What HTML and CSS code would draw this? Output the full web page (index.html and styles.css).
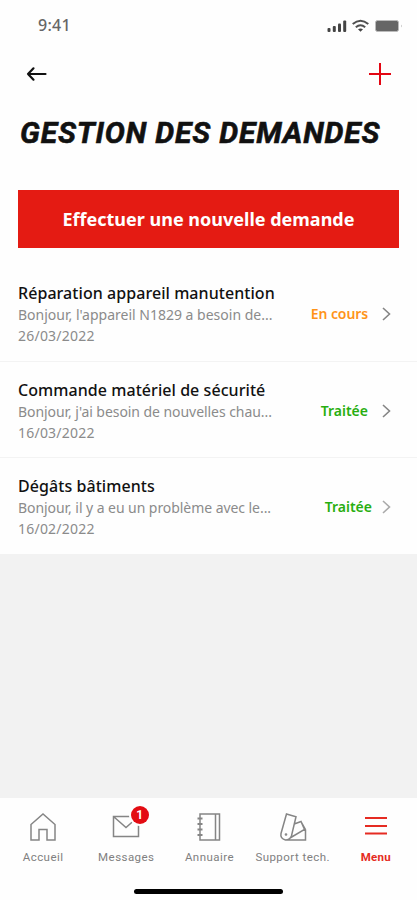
FILE: index.html
```html
<!DOCTYPE html>
<html lang="fr">
<head>
<meta charset="utf-8">
<title>Gestion des demandes</title>
<link rel="stylesheet" href="styles.css">
</head>
<body>
<div class="screen">
  <header class="status">
    <span class="time">9:41</span>
    <svg class="status-icons" width="76" height="14" viewBox="0 0 76 14">
      <g fill="#444"><rect x="0.5" y="9" width="3" height="4" rx="1"/><rect x="5.800" y="7" width="3" height="6" rx="1"/><rect x="11" y="4.500" width="3" height="8.500" rx="1"/><rect x="16.200" y="1.500" width="3" height="11.500" rx="1"/></g>
      <g fill="none" stroke="#505050" stroke-width="2"><path d="M25.700 5.100Q33.500-1.500 41.300 5.100"/><path d="M28.800 8.200Q33.500 4.300 38.200 8.200"/></g>
      <path d="M31 10.200Q33.500 8.800 36 10.200L33.500 12.800Z" fill="#444"/>
      <rect x="48.500" y="1.500" width="23" height="11" rx="2" fill="#666" stroke="#bbb"/><path d="M74 5.500v3q1.500-1.500 0-3" fill="#aaa"/>
    </svg>
  </header>
  <nav class="topbar">
    <svg width="22" height="16" viewBox="0 0 22 16" fill="none" stroke="#111" stroke-width="2.200" stroke-linecap="round" stroke-linejoin="round"><path d="M19.500 8H2M7.500 2.300L2 8l5.500 5.700"/></svg>
    <svg class="plus" width="22" height="22" viewBox="0 0 22 22" fill="none" stroke="#e30613" stroke-width="2"><path d="M11 0v22M0 11h22"/></svg>
  </nav>
  <h1>GESTION DES DEMANDES</h1>
  <button class="cta">Effectuer une nouvelle demande</button>
  <main class="list">
    <article class="item first">
      <div class="body"><h2>Réparation appareil manutention</h2><p>Bonjour, l'appareil N1829 a besoin de...</p><time>26/03/2022</time></div>
      <span class="state pending">En cours</span>
      <svg class="chev" width="9" height="14" viewBox="0 0 9 14"><path d="M1 1l6.500 6L1 13"/></svg>
    </article>
    <article class="item">
      <div class="body"><h2>Commande matériel de sécurité</h2><p class="tight">Bonjour, j'ai besoin de nouvelles chau...</p><time>16/03/2022</time></div>
      <span class="state done">Traitée</span>
      <svg class="chev" width="9" height="14" viewBox="0 0 9 14"><path d="M1 1l6.500 6L1 13"/></svg>
    </article>
    <article class="item last">
      <div class="body"><h2>Dégâts bâtiments</h2><p class="tight">Bonjour, il y a eu un problème avec le...</p><time>16/02/2022</time></div>
      <span class="state done">Traitée</span>
      <svg class="chev" width="9" height="14" viewBox="0 0 9 14"><path d="M1 1l6.500 6L1 13"/></svg>
    </article>
  </main>
  <div class="filler"></div>
  <footer>
    <div class="tabs">
      <a class="tab"><svg width="28" height="30" viewBox="0 0 28 30"><path d="M2 12.500L14 2l12 10.500V28h-8V17.500h-8V28H2z"/></svg><span>Accueil</span></a>
      <a class="tab"><svg width="28" height="30" viewBox="0 0 28 30"><path d="M1.500 4.500h25v20h-25zM1.500 4.500l12.500 11 12.500-11"/></svg><b class="badge">1</b><span>Messages</span></a>
      <a class="tab"><svg width="28" height="30" viewBox="0 0 28 30"><path d="M5 2h19.500v26H5zM20.500 2v26"/><path d="M2.500 6.500h5M2.500 12h5M2.500 17.500h5M2.500 23h5" stroke-width="2"/></svg><span>Annuaire</span></a>
      <a class="tab"><svg width="28" height="30" viewBox="0 0 28 30"><path d="M7.500 2l9.500 2.700-4.500 19q-1.500 4.300-6 4.300-5.500-1.500-4.500-6.500zM15.300 12l6.700-2.500 3.500 8L11 26M26.500 17.500V28H6.500M22 9.500l4.500 8"/><circle cx="7" cy="22.500" r=".6"/></svg><span>Support tech.</span></a>
      <a class="tab active"><svg width="28" height="30" viewBox="0 0 28 30"><path d="M3 6h22M3 14h22M3 21.500h22"/></svg><span>Menu</span></a>
    </div>
    <div class="home"></div>
  </footer>
</div>
</body>
</html>
```
FILE: styles.css
```css
* { box-sizing: border-box; }
body { margin: 0; font-family: "Noto Sans", "Open Sans", sans-serif; background: #fefefe; }
.screen { width: 417px; height: 900px; display: flex; flex-direction: column; overflow: hidden; }
.status { height: 50px; padding: 14px 14px 0 38px; display: flex; justify-content: space-between; }
.time { font: 500 16px/22px "Noto Sans", sans-serif; letter-spacing: .3px; color: #666; }
.status-icons { margin-top: 5px; }
.topbar { height: 47px; padding: 0 26px; display: flex; align-items: center; justify-content: space-between; }
h1 { margin: 15px 0 0 20px; height: 42px; font: italic 700 30px/42px Roboto, sans-serif; letter-spacing: .840px; color: #111; white-space: nowrap; -webkit-text-stroke: .6px #111; }
.cta { margin: 36px 18px 0; padding: 0 0 1px; height: 58px; flex: none; border: 0; border-radius: 0; background: #e41b13; color: #fff; font: 700 18px/24px "Noto Sans", sans-serif; }
.list { flex: none; margin-top: 17px; }
.item { height: 96px; border-bottom: 1px solid #f3f3f3; padding: 17px 26px 0 18px; display: flex; }
.first { height: 97px; }
.last { border-bottom: 0; }
.body { flex: 1; white-space: nowrap; }
h2 { margin: 0; font-size: 16px; line-height: 22px; font-weight: 500; letter-spacing: .06px; color: #111; }
p { margin: 0; font-size: 14px; line-height: 21px; color: #8b8b8b; }
.tight { letter-spacing: -.06px; }
time { display: block; font-size: 14px; line-height: 22px; letter-spacing: .22px; color: #8b8b8b; }
.state { font-size: 14px; line-height: 20px; font-weight: 600; margin: 22px 14px 0 0; }
.pending { color: #ff9318; letter-spacing: -.1px; }
.done { color: #28ae10; }
.chev { margin-top: 25px; fill: none; stroke: #858585; stroke-width: 1.600; }
.last .state { margin-right: 10px; }
.last .chev { stroke: #aaa; }
.filler { flex: 1; background: #f2f2f2; }
footer { height: 102px; flex: none; display: flex; flex-direction: column; align-items: center; }
.tabs { width: 417px; height: 91px; display: grid; grid-template-columns: repeat(5, 83.200px); padding-left: 1.500px; }
.tab { position: relative; padding-top: 14px; display: flex; flex-direction: column; align-items: center; color: #808080; font: 400 11.500px/16px Roboto, sans-serif; letter-spacing: .45px; white-space: nowrap; }
.tab svg { fill: none; stroke: #858585; stroke-width: 1.500; }
.tab span { margin-top: 7px; }
.badge { position: absolute; left: 46px; top: 8px; width: 18px; height: 18px; border-radius: 50%; box-shadow: 0 0 0 2px #fefefe; background: #e30c13; color: #fff; font: 700 12px/18px Roboto, sans-serif; letter-spacing: 0; text-align: center; }
.active { color: #e52b22; font-weight: 700; letter-spacing: .3px; }
.active svg { stroke: #e52b22; stroke-width: 2; }
.home { width: 149px; height: 5px; border-radius: 3px; background: #000; }
```
